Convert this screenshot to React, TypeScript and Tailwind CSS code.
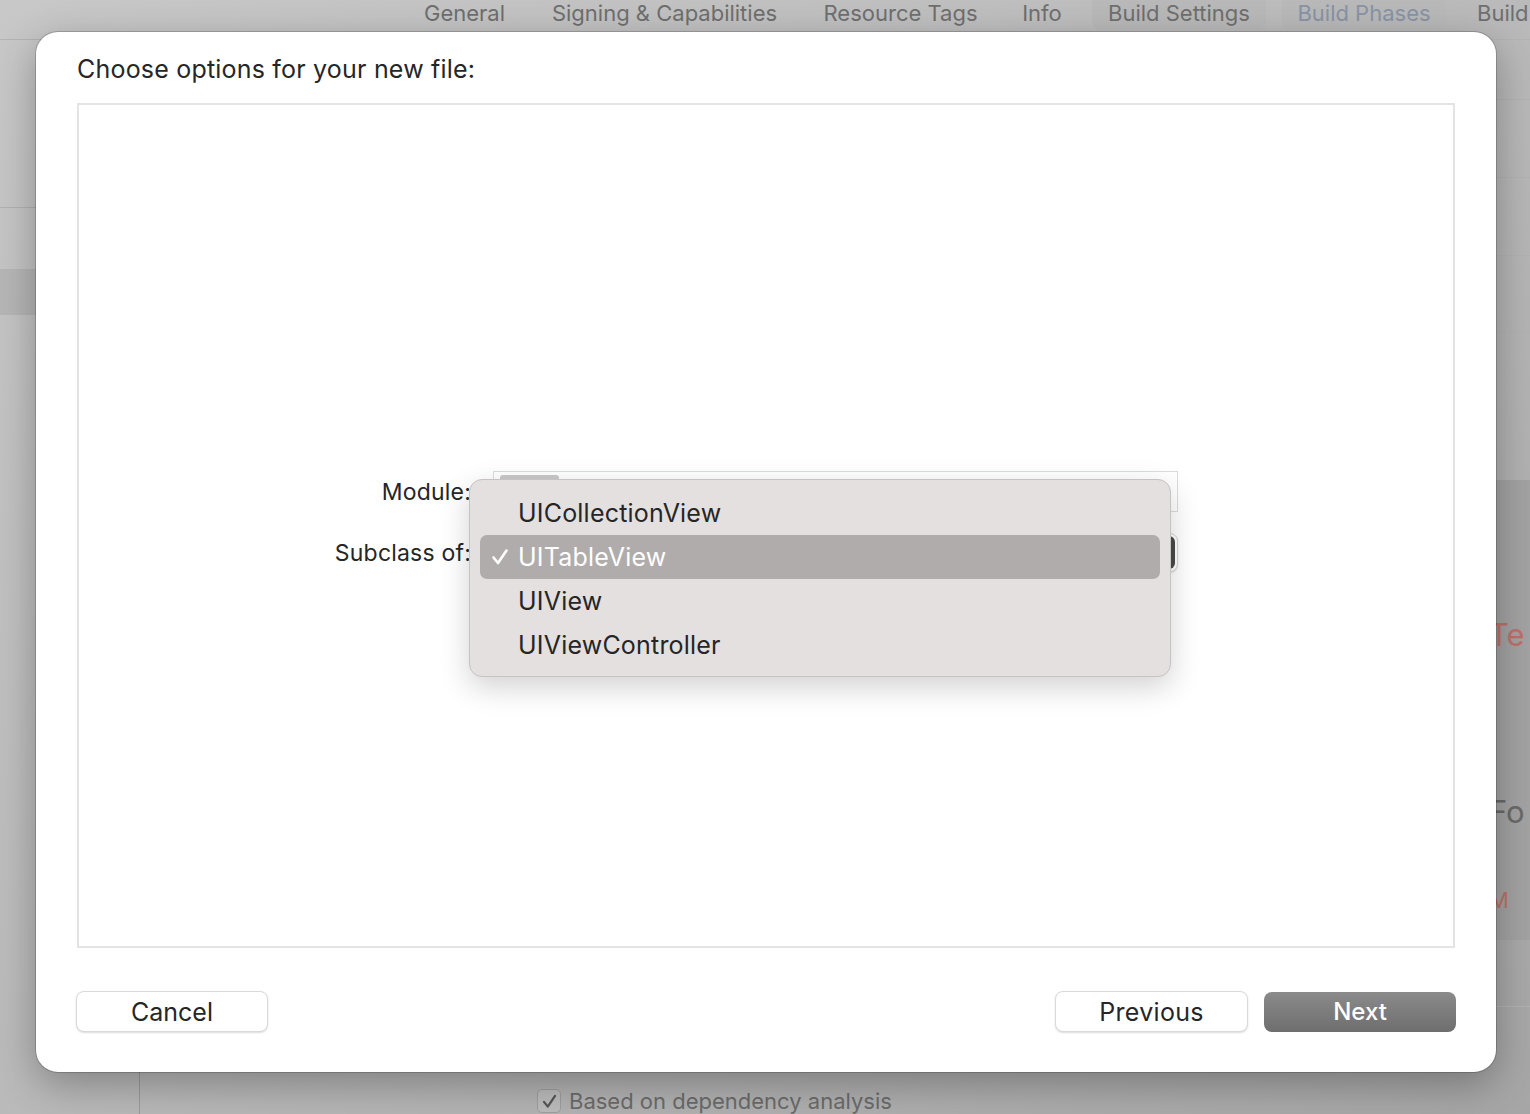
import React from "react";

const tabs = [
  { label: "General", w: "w-[111px]", pill: false, tint: false },
  { label: "Signing & Capabilities", w: "w-[257px]", pill: false, tint: false },
  { label: "Resource Tags", w: "w-[183px]", pill: false, tint: false },
  { label: "Info", w: "w-[68px]", pill: false, tint: false },
  { label: "Build Settings", w: "w-[174px]", pill: true, tint: false },
  { label: "Build Phases", w: "w-[164px]", pill: true, tint: true },
];

const menuItems = ["UICollectionView", "UITableView", "UIView", "UIViewController"];

const Check = ({ className }: { className?: string }) => (
  <svg viewBox="0 0 20 20" className={className} fill="none" stroke="currentColor" strokeWidth="2.6" strokeLinecap="round" strokeLinejoin="round">
    <path d="M3.5 10.5 L8 16 L16.5 3.5" />
  </svg>
);

const App = () => {
  return (
    <div className="relative w-[1530px] h-[1114px] overflow-hidden bg-linear-to-br from-[#c8c8c8] via-[#bababa] to-[#a6a6a6] font-['Inter','Noto_Sans',sans-serif]">
      {/* xcode window behind the sheet */}
      <div className="flex h-[40px] items-start gap-4 pl-[409px] border-b border-[#b4b4b4] text-[22px] leading-[26px] text-[#6f6f6f]">
        {tabs.map((t) => (
          <div
            key={t.label}
            className={`${t.w} shrink-0 h-[30px] text-center whitespace-nowrap ${t.pill ? "bg-[#b9b9b9] rounded-b-[8px]" : ""} ${t.tint ? "text-[#8893a6]" : ""}`}
          >
            {t.label}
          </div>
        ))}
        <div className="shrink-0 pl-[15px]">Build</div>
      </div>

      <div className="flex h-[1074px]">
        <div className="w-[140px] shrink-0 border-r border-[#9b9b9b] flex flex-col">
          <div className="h-[168px] border-b border-[#b2b2b2]"></div>
          <div className="h-[61px]"></div>
          <div className="h-[46px] bg-[#b1b1b1]/70"></div>
        </div>
        <div className="flex-1 flex flex-col">
          <div className="h-[60px] border-b border-[#b2b2b2]"></div>
          <div className="h-[78px] border-b border-[#b2b2b2]"></div>
          <div className="h-[78px] border-b border-[#b2b2b2]"></div>
          <div className="h-[77px] border-b border-[#b2b2b2]"></div>
          <div className="h-[90px] border-b border-[#b2b2b2]"></div>
          <div className="h-[34px] border-b border-[#b2b2b2]"></div>
          <div className="h-[23px]"></div>
          <div className="h-[460px] bg-[#a3a3a3] flex flex-col pl-[1349px] text-[31px] leading-[36px] whitespace-nowrap">
            <div className="mt-[137px] text-[#c0706a]">Te</div>
            <div className="mt-[141px] text-[#6a6a6a]">Fo</div>
            <div className="mt-[52px] text-[22px] text-[#c0706a]">M</div>
          </div>
          <div className="h-[67px] border-b border-[#b2b2b2]"></div>
          <div className="flex items-center gap-2 pl-[397px] mt-[81px] whitespace-nowrap">
            <div className="w-[24px] h-[24px] rounded-[5px] bg-[#bcbcbc] border border-[#9e9e9e] flex items-center justify-center text-[#555555]">
              <Check className="w-[17px] h-[17px]" />
            </div>
            <span className="text-[22px] leading-[26px] text-[#6b6b6b]">Based on dependency analysis</span>
          </div>
        </div>
      </div>

      {/* the sheet */}
      <div className="absolute left-[36px] top-[32px] w-[1460px] h-[1040px] rounded-[22px] bg-white shadow-[0_12px_40px_rgba(0,0,0,0.3),0_0_0_1px_rgba(0,0,0,0.18)] flex flex-col px-[41px] text-[#262626]">
        <div className="pt-[22px] text-[25px] leading-[30px] tracking-[0.2px]">Choose options for your new file:</div>
        <div className="mt-[19px] h-[845px] border-2 border-[#e4e4e4] flex flex-col pt-[366px] gap-[21px]">
          <div className="flex items-center h-[41px]">
            <div className="w-[393px] text-right text-[23px] leading-[26px] tracking-[0.2px] pr-[1px]">Module:</div>
            <div className="ml-[21px] w-[685px] h-[41px] border border-[#dcdcdc] bg-white flex items-start">
              <div className="ml-[6px] mt-[3px] w-[59px] h-[26px] bg-[#c9c9c9] rounded-[3px]"></div>
            </div>
          </div>
          <div className="flex items-center h-[39px]">
            <div className="w-[393px] text-right text-[23px] leading-[26px] tracking-[0.2px] pr-[1px]">Subclass of:</div>
            <div className="ml-[21px] w-[685px] h-[39px] rounded-[8px] border border-[#d8d8d8] bg-white shadow-[0_1px_2px_rgba(0,0,0,0.12)] flex justify-end p-[2px]">
              <div className="w-[20px] h-full rounded-r-[6px] bg-[#4a4a4a]"></div>
            </div>
          </div>
        </div>

        <div className="mt-[43px] flex items-center">
          <button className="w-[192px] h-[41px] -ml-px rounded-[8px] bg-white border border-[#d9d9d9] shadow-[0_1px_2px_rgba(0,0,0,0.14)] text-[25px] leading-[28px] text-[#262626]">
            Cancel
          </button>
          <div className="flex-1"></div>
          <button className="w-[193px] h-[41px] rounded-[8px] bg-white border border-[#d9d9d9] shadow-[0_1px_2px_rgba(0,0,0,0.14)] text-[25px] leading-[28px] tracking-[0.3px] text-[#262626]">
            Previous
          </button>
          <button className="ml-4 w-[192px] h-[40px] -mr-px rounded-[8px] bg-linear-to-b from-[#8b8b8b] to-[#6e6e6e] text-[24px] leading-[28px] font-medium text-white">
            Next
          </button>
        </div>

        {/* popup menu */}
        <div className="absolute left-[433px] top-[447px] w-[702px] h-[198px] rounded-[13px] bg-[#e3e0df] border border-[#c6c3c2] shadow-[0_10px_30px_rgba(0,0,0,0.18)] px-[10px] pt-[11px] flex flex-col">
          {menuItems.map((item) => {
            const active = item === "UITableView";
            return (
              <div
                key={item}
                className={`h-[44px] flex items-center rounded-[7px] ${active ? "bg-[#b0acab] text-white" : "text-[#262626]"}`}
              >
                <div className="w-[38px] flex justify-end pr-[8px]">
                  {active && <Check className="w-[20px] h-[20px] text-white" />}
                </div>
                <span className="text-[25px] leading-[30px] tracking-[0.2px]">{item}</span>
              </div>
            );
          })}
        </div>
      </div>
    </div>
  );
};

export default App;
